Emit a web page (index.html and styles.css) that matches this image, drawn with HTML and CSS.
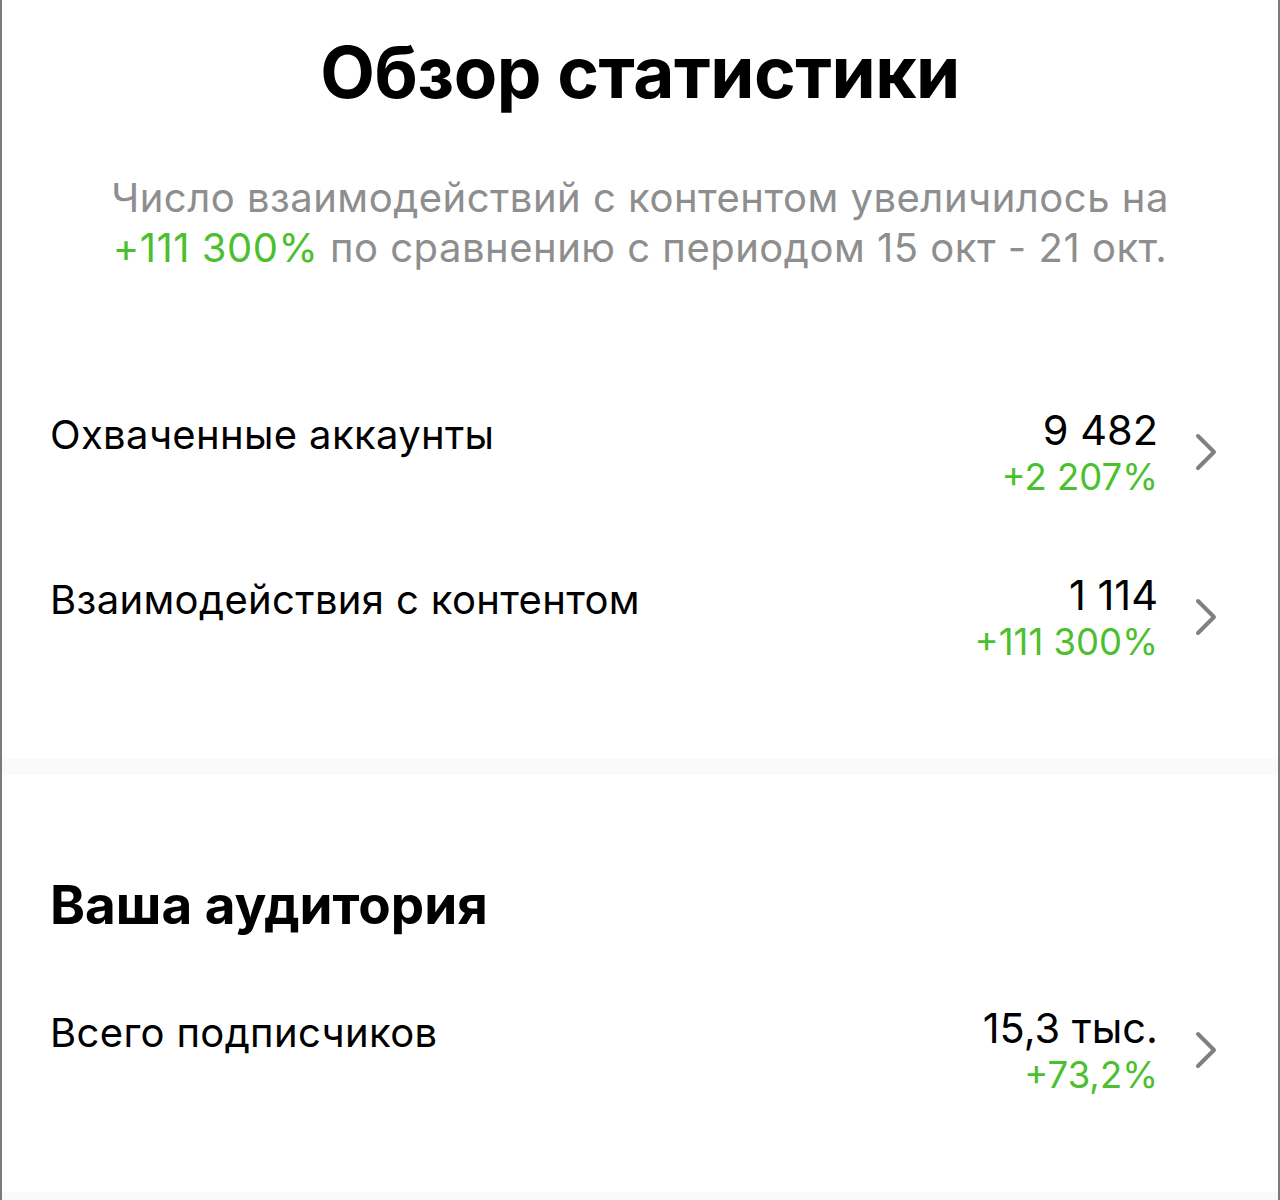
FILE: index.html
```html
<!DOCTYPE html>
<html lang="ru">
<head>
    <meta charset="UTF-8">
    <meta name="viewport" content="width=device-width, initial-scale=1.0">
    <title>Обзор статистики</title>
    <link rel="stylesheet" href="styles.css">
</head>
<body>
    <div class="page">
        <div class="overview">
            <div class="intro">
                <h1 class="title">Обзор статистики</h1>
                <p class="summary">
                    Число взаимодействий с контентом увеличилось на<br>
                    <span class="green">+111&nbsp;300%</span> по сравнению с периодом 15 окт - 21 окт.
                </p>
            </div>

            <div class="row row-first">
                <div class="label">Охваченные аккаунты</div>
                <div class="values">
                    <div class="number">9 482</div>
                    <div class="change">+2 207%</div>
                </div>
                <svg class="chevron" viewBox="0 0 24 38"><path d="M4 3 L20 19 L4 35"/></svg>
            </div>

            <div class="row row-second">
                <div class="label">Взаимодействия с контентом</div>
                <div class="values">
                    <div class="number">1 114</div>
                    <div class="change">+111 300%</div>
                </div>
                <svg class="chevron" viewBox="0 0 24 38"><path d="M4 3 L20 19 L4 35"/></svg>
            </div>
        </div>

        <div class="band"></div>

        <div class="audience">
            <h2 class="heading">Ваша аудитория</h2>

            <div class="row row-audience">
                <div class="label">Всего подписчиков</div>
                <div class="values">
                    <div class="number">15,3 тыс.</div>
                    <div class="change">+73,2%</div>
                </div>
                <svg class="chevron" viewBox="0 0 24 38"><path d="M4 3 L20 19 L4 35"/></svg>
            </div>
        </div>

        <div class="band"></div>
    </div>
</body>
</html>
```

FILE: styles.css
```css
*{
    box-sizing: border-box;
    padding: 0;
    margin: 0;
}

body{
    background: #fff;
    font-family: Inter, "Noto Sans", sans-serif;
    color: #000;
}

.page{
    border-left: 2px solid #7b7b7b;
    border-right: 2px solid #7b7b7b;
    min-height: 1200px;
}

.overview{
    padding: 29px 60px 93px 48px;
}

/* title block is centered on the whole page, not the padded box */
.intro{
    margin: 0 -60px 0 -48px;
}

.title{
    font-size: 71px;
    line-height: 86px;
    font-weight: 700;
    text-align: center;
    letter-spacing: -0.5px;
}

.summary{
    margin-top: 58px;
    font-size: 40px;
    line-height: 50px;
    letter-spacing: 0.5px;
    color: #8e8e8e;
    text-align: center;
}

.green{
    color: #4cbf2f;
}

.row{
    display: flex;
    align-items: flex-start;
}

.row-first{
    margin-top: 134px;
}

.row-second{
    margin-top: 71px;
}

.row-audience{
    margin-top: 70px;
}

.label{
    flex: 1;
    margin-top: 5px;
    font-size: 40px;
    line-height: 46px;
    letter-spacing: 0.35px;
}

.values{
    text-align: right;
}

.number{
    font-size: 41.5px;
    line-height: 46px;
}

.change{
    font-size: 36.5px;
    line-height: 48px;
    color: #4cbf2f;
}

.chevron{
    width: 24px;
    height: 38px;
    margin-top: 26px;
    margin-left: 36px;
    fill: none;
    stroke: #808080;
    stroke-width: 4;
    stroke-linecap: round;
    stroke-linejoin: round;
}

.band{
    height: 16px;
    background: #fafafa;
}

.audience{
    padding: 100px 60px 93px 48px;
}

.heading{
    font-size: 53px;
    line-height: 60px;
    font-weight: 700;
}
```
